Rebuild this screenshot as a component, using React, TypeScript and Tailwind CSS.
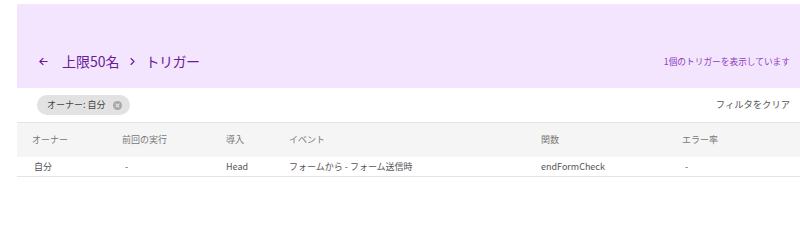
const font = { fontFamily: '"Noto Sans CJK JP", "Noto Sans", sans-serif' }

const columns = ['オーナー', '前回の実行', '導入', 'イベント', '関数', 'エラー率']
const rows = [['自分', '-', 'Head', 'フォームから - フォーム送信時', 'endFormCheck', '-']]

export default function App() {
  return (
    <div className="h-[200px] w-[800px] bg-white pl-[17px] pt-[4px]" style={font}>
      {/* header band */}
      <div className="flex h-[84px] items-end justify-between bg-[#f3e5fd] pb-[17px] pl-[21px] pr-[10px]">
        <div className="flex items-center text-[14px] leading-[20px] text-[#6a1b9a]">
          <svg width="11" height="11" viewBox="0 0 24 24" fill="none" stroke="currentColor" strokeWidth="2.4" strokeLinecap="round" strokeLinejoin="round">
            <path d="M20 12H4M11 5l-7 7 7 7" />
          </svg>
          <span className="ml-[13px]">上限50名</span>
          <svg className="ml-[8px]" width="9" height="9" viewBox="0 0 24 24" fill="none" stroke="currentColor" strokeWidth="3" strokeLinecap="round" strokeLinejoin="round">
            <path d="M8 4l8 8-8 8" />
          </svg>
          <span className="ml-[9px] tracking-[-0.5px]">トリガー</span>
        </div>
        <div className="pb-[2px] text-[8.7px] leading-[14px] text-[#8e3fbf]">1個のトリガーを表示しています</div>
      </div>

      {/* filter bar */}
      <div className="flex h-[34px] items-center justify-between pl-[20px] pr-[10px]">
        <div className="flex h-[20px] items-center rounded-full bg-[#e2e2e2] pl-[10px] pr-[8px] text-[9px] text-[#444]">
          <span>オーナー: 自分</span>
          <span className="ml-[7px] flex h-[9px] w-[9px] items-center justify-center rounded-full bg-[#a8a8a8]">
            <svg width="5" height="5" viewBox="0 0 10 10" stroke="#e2e2e2" strokeWidth="2.2" strokeLinecap="round">
              <path d="M2 2l6 6M8 2l-6 6" />
            </svg>
          </span>
        </div>
        <div className="text-[9.3px] text-[#555]">フィルタをクリア</div>
      </div>

      {/* table */}
      <div className="border-t border-[#e4e4e4]">
        <div className="grid h-[34px] grid-cols-[90px_104px_63px_252px_141px_1fr] items-center bg-[#f5f5f5] px-[15px] text-[9px] text-[#777]">
          {columns.map((c) => (
            <div key={c}>{c}</div>
          ))}
        </div>
        {rows.map((r, i) => (
          <div key={i} className="grid h-[20px] grid-cols-[90px_104px_63px_252px_141px_1fr] items-center border-b border-[#e4e4e4] px-[15px] text-[9px] text-[#555]">
            {r.map((cell, j) => (
              <div key={j} className={j === 0 ? 'pl-[2px]' : j === 1 || j === 5 ? 'pl-[3px]' : ''}>
                {cell}
              </div>
            ))}
          </div>
        ))}
      </div>
    </div>
  )
}
